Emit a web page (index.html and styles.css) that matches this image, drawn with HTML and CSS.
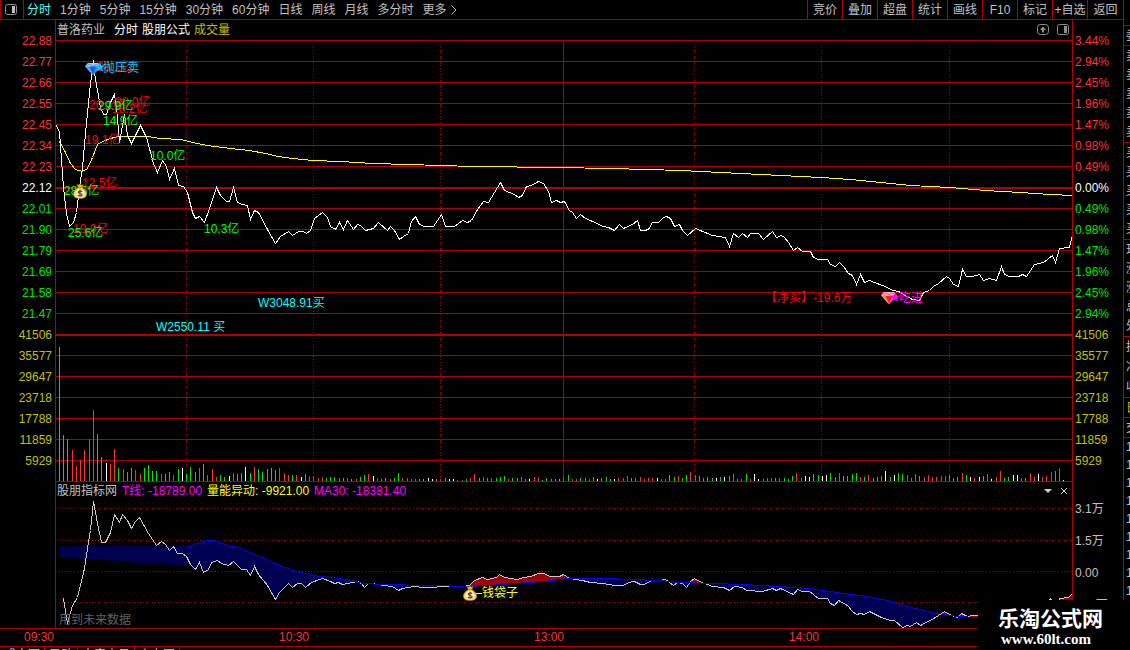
FILE: index.html
```html
<!DOCTYPE html>
<html lang="zh-CN">
<head>
    <meta charset="UTF-8">
    <meta name="viewport" content="width=device-width, initial-scale=1.0">
    <title>普洛药业 分时</title>
    <link rel="stylesheet" href="styles.css">
</head>
<body>
    <div class="app">
        <div class="main">
            <header class="topbar">
                <button class="layout-button" aria-label="布局">
                    <svg width="12" height="11" viewBox="0 0 12 11"><rect x=".5" y=".5" width="11" height="10" rx="2" fill="none" stroke="#909090"/><rect x="7" y="2" width="3" height="7" fill="#c0c0c0"/></svg>
                </button>
                <nav class="periods">
                    <button class="active">分时</button>
                    <button>1分钟</button>
                    <button>5分钟</button>
                    <button>15分钟</button>
                    <button>30分钟</button>
                    <button>60分钟</button>
                    <button>日线</button>
                    <button>周线</button>
                    <button>月线</button>
                    <button>多分时</button>
                    <button class="more">更多<svg width="7" height="10" viewBox="0 0 7 10"><path d="M1.5 .5L6 5L1.5 9.5" fill="none" stroke="#c0c0c0"/></svg></button>
                </nav>
                <div class="tools">
                    <button>竞价</button>
                    <button>叠加</button>
                    <button>超盘</button>
                    <button>统计</button>
                    <button>画线</button>
                    <button>F10</button>
                    <button>标记</button>
                    <button>+自选</button>
                    <button>返回</button>
                </div>
            </header>

            <div class="charts">
                <div class="axis axis-left">
                    <span class="up">22.88</span>
                    <span class="up">22.77</span>
                    <span class="up">22.66</span>
                    <span class="up">22.55</span>
                    <span class="up">22.45</span>
                    <span class="up">22.34</span>
                    <span class="up">22.23</span>
                    <span class="flat">22.12</span>
                    <span class="down">22.01</span>
                    <span class="down">21.90</span>
                    <span class="down">21.79</span>
                    <span class="down">21.69</span>
                    <span class="down">21.58</span>
                    <span class="down">21.47</span>
                    <span class="vol">41506</span>
                    <span class="vol">35577</span>
                    <span class="vol">29647</span>
                    <span class="vol">23718</span>
                    <span class="vol">17788</span>
                    <span class="vol">11859</span>
                    <span class="vol">5929</span>
                </div>

                <div class="panel">
                    <div class="panel-title">
                        <span class="stock">普洛药业</span>
                        <span class="flat">分时</span>
                        <span class="flat">股朋公式</span>
                        <span class="vol">成交量</span>
                        <div class="panel-buttons">
                            <button aria-label="上移">
                                <svg width="12" height="12" viewBox="0 0 12 12"><rect x=".5" y=".5" width="11" height="10" rx="3" fill="none" stroke="#909090"/><path d="M6 2.5L9 6H7V8.5H5V6H3Z" fill="#909090"/></svg>
                            </button>
                            <button aria-label="侧栏">
                                <svg width="12" height="12" viewBox="0 0 12 12"><rect x=".5" y=".5" width="11" height="10" rx="2" fill="none" stroke="#909090"/><rect x="7" y="2" width="3" height="7" fill="#909090"/></svg>
                            </button>
                        </div>
                    </div>
                    <div class="plot" id="pricePlot">
                        <svg class="price-svg" id="price" viewBox="55.5 39.5 1016 441" preserveAspectRatio="none"></svg>
                    </div>
                    <div class="indicator-title">
                        <span class="stock">股朋指标网</span>
                        <span class="magenta">T线: -18789.00</span>
                        <span class="yellow">量能异动: -9921.00</span>
                        <span class="magenta">MA30: -18381.40</span>
                        <div class="panel-buttons">
                            <button aria-label="菜单"><svg width="8" height="8" viewBox="0 0 8 8"><path d="M0 2H8L4 6Z" fill="#d0d0d0"/></svg></button>
                            <button aria-label="关闭"><svg width="8" height="8" viewBox="0 0 8 8"><path d="M1 1L7 7M7 1L1 7" stroke="#d0d0d0"/></svg></button>
                        </div>
                    </div>
                    <div class="plot" id="indicatorPlot">
                        <svg class="indicator-svg" id="indicator" viewBox="55.5 498.5 1016 129" preserveAspectRatio="none"></svg>
                    </div>
                </div>

                <div class="axis axis-right">
                    <span class="up">3.44%</span>
                    <span class="up">2.94%</span>
                    <span class="up">2.45%</span>
                    <span class="up">1.96%</span>
                    <span class="up">1.47%</span>
                    <span class="up">0.98%</span>
                    <span class="up">0.49%</span>
                    <span class="flat">0.00%</span>
                    <span class="down">0.49%</span>
                    <span class="down">0.98%</span>
                    <span class="down">1.47%</span>
                    <span class="down">1.96%</span>
                    <span class="down">2.45%</span>
                    <span class="down">2.94%</span>
                    <span class="vol">41506</span>
                    <span class="vol">35577</span>
                    <span class="vol">29647</span>
                    <span class="vol">23718</span>
                    <span class="vol">17788</span>
                    <span class="vol">11859</span>
                    <span class="vol">5929</span>
                    <div class="axis-indicator">
                        <span>3.1万</span>
                        <span>1.5万</span>
                        <span>0.00</span>
                        <span>-1.5万</span>
                    </div>
                </div>
            </div>

            <div class="times">
                <span>09:30</span>
                <span>10:30</span>
                <span>13:00</span>
                <span>14:00</span>
            </div>
            <div class="tabs">
                <button class="active">成交图</button>
                <button>异动</button>
                <button>大宗交易</button>
                <button>主力图</button>
            </div>
        </div>

        <aside class="quote">
            <div class="quote-block"><span>委</span></div>
            <div class="quote-block five"><span>卖</span><span>卖</span><span>卖</span><span>卖</span><span>卖</span></div>
            <div class="quote-block five"><span>买</span><span>买</span><span>买</span><span>买</span><span>买</span></div>
            <div class="quote-block five"><span>现</span><span>涨</span><span>涨</span><span>总</span><span>外</span></div>
            <div class="quote-block three"><span>换</span><span>净</span><span>收</span></div>
            <div class="quote-block vol"><span>日</span></div>
            <div class="quote-block"><span>交</span></div>
            <div class="ticks"><span>1</span><span>1</span><span>1</span><span>1</span><span>1</span><span>1</span><span>1</span><span>1</span><span>1</span></div>
        </aside>

        <div class="watermark">
            <strong>乐淘公式网</strong>
            <span>www.60lt.com</span>
        </div>
    </div>

    <svg class="defs">
        <symbol id="bag" viewBox="0 0 16 17">
            <path d="M4.5 1.5L6.5 2L8 .8L9.5 2L11.5 1.5L10 5H6Z" fill="#e8c000" stroke="#806000" stroke-width=".6"/>
            <path d="M6 5H10C13 7 15.5 9.5 15 12.5C14.5 15.5 12 16.5 8 16.5S1.500 15.5 1 12.500C.5 9.500 3 7 6 5Z" fill="#f5dc50" stroke="#a08030" stroke-width=".7"/>
            <circle cx="8" cy="11" r="4.300" fill="#fff0c8"/>
            <path d="M10.300 9.200C9.600 8.200 6.200 8 6 9.700S10.400 11 10.300 12.600S6.500 14 5.700 12.700M8 7.200V14.500" fill="none" stroke="#603838" stroke-width="1.200"/>
        </symbol>
        <symbol id="gemBlue" viewBox="0 0 16 13">
            <path d="M3 .5H13L16 4L8 13L0 4Z" fill="#3c8cf0"/>
            <path d="M3 .5H13L16 4H0Z" fill="#a8d0ff"/>
            <path d="M5 4H11L8 13Z" fill="#1c60d0"/>
            <path d="M2 3L5 1.500L8 3.500L11 1.500L14 3" fill="none" stroke="#5098f0"/>
            <path d="M2.500 5L6.500 10" stroke="#90c8ff"/>
        </symbol>
        <symbol id="gemRed" viewBox="0 0 16 13">
            <path d="M3 .5H13L16 4L8 13L0 4Z" fill="#f07868"/>
            <path d="M3 .5H13L16 4H0Z" fill="#ffc0b0"/>
            <path d="M4.500 4.500H11.500L8 12Z" fill="#ff1830"/>
            <path d="M2 3.500L5 1.500L8 3L11 1.500L14 3.500" fill="none" stroke="#e06050"/>
            <path d="M2.500 5.500L6.500 10" stroke="#ffb0a0"/>
        </symbol>
        <symbol id="starBlue" viewBox="0 0 10 10">
            <path d="M5 0L6.300 3.500H10L7.200 5.800L8.200 9.500L5 7.400L1.800 9.500L2.800 5.800L0 3.500H3.700Z" fill="#00c8ff"/>
        </symbol>
        <symbol id="starMagenta" viewBox="0 0 10 10">
            <path d="M5 0L6.300 3.500H10L7.200 5.800L8.200 9.500L5 7.400L1.800 9.500L2.800 5.800L0 3.500H3.700Z" fill="#f0f"/>
        </symbol>
    </svg>

    <script>
        const LEFT = 56;
        const WIDTH = 1016;
        const SVG_NS = 'http://www.w3.org/2000/svg';

        const priceLine = '56,125 59,132 60,145 63,187 66,213 69,226 73,222 76,212 79,187 82,167 85,133 88,103 90,83 93,60 94,73 97,90 100,107 103,114 106,114 110,102 114,94 116,107 119,142 124,114 127,135 131,143 140,125 146,137 153,163 157,172 162,160 166,166 169,179 174,168 178,185 183,186 187,192 192,212 195,218 199,216 204,222 208,211 213,196 216,187 220,195 226,201 229,201 233,187 237,202 242,204 247,205 250,219 254,210 258,212 267,229 275,243 280,236 288,231 292,235 298,231 303,231 306,233 310,230 314,218 322,212 327,217 330,226 335,229 339,222 343,229 347,220 353,229 357,224 360,225 365,230 373,228 378,222 387,230 390,226 394,230 399,239 403,236 408,233 411,221 415,216 419,224 424,226 433,226 441,214 445,226 454,226 462,220 467,222 471,220 477,209 483,201 488,202 500,182 504,190 514,194 518,197 522,195 526,186 531,185 538,181 543,183 548,191 551,202 556,200 560,202 564,201 569,210 572,212 576,218 580,214 585,218 597,223 602,226 608,227 614,230 619,224 623,228 632,224 637,220 640,230 644,230 648,229 652,222 658,222 663,217 666,216 670,218 674,226 679,224 682,230 687,235 695,228 712,235 718,236 725,237 729,246 733,233 738,237 742,233 747,237 750,233 758,233 763,239 772,231 776,237 781,235 784,237 788,242 793,250 797,247 802,251 810,251 813,257 818,259 827,259 830,264 835,266 839,262 843,266 848,273 852,275 856,284 860,274 864,282 869,280 887,287 892,290 898,291 912,299 919,300 923,292 929,290 933,286 938,283 946,276 949,278 953,284 958,286 962,269 966,276 972,276 979,274 983,280 989,278 996,280 1001,266 1004,274 1009,276 1018,276 1022,274 1026,276 1034,264 1043,262 1052,255 1055,262 1059,248 1069,247 1072,235';
        const avgLine = '59,141 65,152 70,163 75,169 82,171 87,168 92,157 97,144 102,141 110,138 118,136 147,136 160,138 180,139 197,143 207,145 230,148 249,150 265,153 278,156 292,158 313,160 340,161 373,163 407,164 440,165 473,166 558,167 609,168 647,169 680,170 720,172 760,174 800,176 821,177 850,179 880,182 910,185 949,187 985,190 1020,192 1050,194 1072,195';

        // r = 涨, g = 跌, w = 平, 数字为柱高
        const volumes = 'g134 g46 g42 r31 r15 r21 r31 r42 r71 g47 g24 w18 r17 r32 g13 r12 g9 g13 r11 r7 g13 g16 g10 g10 r7 g7 g9 r6 g12 w13 g7 g14 g9 r13 g17 r6 r12 r4 g6 g4 w5 r8 g7 g8 w14 g8 r14 g12 g9 g12 g13 g11 r13 r8 r6 g6 r6 w4 g7 r5 r5 r3 r4 g3 ' +
            'g4 g4 r3 g3 r3 g2 r2 g4 g6 r7 w5 r3 g2 g3 r2 g3 g8 r3 r3 r2 r2 g2 g2 w3 w2 r2 r2 g3 w2 w2 r1 r1 g2 r3 r7 g3 r4 g3 r3 g3 g4 g5 r2 g3 g3 r4 g2 w2 r4 r4 g1 g3 g2 g2 g2 r4 g6 r2 r2 g3 g3 r2 g4 w2 g3 g4 g2 w2 r3 r3 r5 g3 g3 r4 r2 r3 r3 w3 ' +
            'r2 r2 g6 g4 r5 g3 g6 r9 r6 g5 g3 g4 g3 w3 g4 w4 g5 r7 g2 r2 g7 r2 w7 w2 g2 r3 r3 g3 r3 g3 g2 g5 r8 g3 w5 w4 g7 g6 w5 w6 g8 g4 r8 g5 g5 g7 g8 r4 g4 r6 g3 g4 g5 w10 g4 w6 g8 g7 r6 g3 r7 g5 r4 r6 r4 r4 r5 r5 g6 g3 g4 r8 g6 w4 r3 w4 g5 r7 ' +
            'w2 r4 r10 g3 g4 w6 w6 r3 g3 r8 r4 w7 r4 r5 r9 g10 r13 w1';

        const fundLine = '63,598 67,623 72,605 77,597 80,585 84,568 87,548 90,530 93,501 97,523 101,542 105,542 110,532 114,514 119,522 122,514 127,520 131,528 135,521 139,517 148,533 156,545 161,541 165,544 169,550 173,546 177,553 182,553 186,556 190,564 195,569 199,562 203,572 208,569 211,562 217,560 221,563 228,565 233,561 241,569 246,569 250,575 254,566 258,574 267,585 275,599 279,592 288,583 292,587 297,583 301,583 305,587 311,582 322,578 330,581 334,583 338,582 342,584 357,581 361,583 364,587 368,583 371,583 383,585 392,586 398,590 402,588 413,586 424,587 433,587 440,586 450,586 463,586 469,585 474,580 482,577 487,579 496,577 499,574 504,577 517,579 523,577 530,576 538,573 543,573 550,576 559,576 563,574 569,578 582,580 590,582 603,583 614,585 623,585 628,582 634,581 640,584 644,584 651,580 658,580 665,579 673,585 677,582 682,583 686,587 690,581 694,578 699,581 712,586 723,587 729,590 734,586 742,587 746,590 762,591 772,588 776,590 780,588 793,594 797,589 802,591 809,591 818,598 827,598 830,603 834,605 838,600 847,605 852,611 856,614 860,613 864,614 869,611 881,617 890,620 894,620 902,627 907,625 910,626 916,622 920,625 935,617 944,611 949,614 957,617 961,613 967,616 973,615 978,615 1000,612 1048,602 1050,598 1053,602 1058,603 1059,598 1068,597 1072,593';
        const maLine = '186,547 197,543 207,540 214,540 227,545 238,547 252,553 262,557 277,564 293,570 312,575 330,577 347,579 363,583 383,584 427,585 469,586 487,585 513,583 543,581 568,578 607,578 630,579 658,580 680,582 743,584 777,586 810,588 843,593 860,595 887,600 910,607 937,613 957,616 978,617 1072,603';

        function add(svg, name, attrs) {
            const el = document.createElementNS(SVG_NS, name);
            for (const key in attrs) el.setAttribute(key, attrs[key]);
            svg.appendChild(el);
        }

        function line(svg, x1, y1, x2, y2, cls) {
            add(svg, 'line', { x1, y1, x2, y2, class: cls });
        }

        function parse(str) {
            return str.split(' ').map(p => p.split(',').map(Number));
        }

        function valueAt(points, x) {
            for (let i = 1; i < points.length; i++) {
                const [x1, y1] = points[i - 1];
                const [x2, y2] = points[i];
                if (x <= x2) return y1 + (y2 - y1) * (x - x1) / (x2 - x1);
            }
            return points[points.length - 1][1];
        }

        // 两条线之间的填充
        function band(svg, a, b, from, to, cls) {
            const cut = pts => [[from, valueAt(pts, from)], ...pts.filter(p => p[0] > from && p[0] < to), [to, valueAt(pts, to)]];
            add(svg, 'polygon', { points: cut(a).concat(cut(b).reverse()).join(' '), class: cls });
        }

        function label(plotId, top, items) {
            const plot = document.getElementById(plotId);
            items.forEach(([x, y, text, cls]) => {
                const el = document.createElement('span');
                el.className = 'label ' + cls;
                el.textContent = text;
                el.style.left = (x - LEFT) / WIDTH * 100 + '%';
                el.style.top = y - top + 'px';
                plot.appendChild(el);
            });
        }

        function icon(plotId, top, x, y, id, cls = 'icon') {
            const plot = document.getElementById(plotId);
            const svg = document.createElementNS(SVG_NS, 'svg');
            svg.setAttribute('class', cls);
            svg.style.left = (x - LEFT) / WIDTH * 100 + '%';
            svg.style.top = y - top + 'px';
            add(svg, 'use', { href: '#' + id });
            plot.appendChild(svg);
        }

        function drawPrice() {
            const svg = document.getElementById('price');
            for (let i = 0; i < 21; i++) {
                const y = 40 + i * 21;
                line(svg, 55, y, 1072, y, 'grid');
                if (i === 7 || i === 14) line(svg, 55, y + 1, 1072, y + 1, 'grid');
            }
            [186, 313, 440, 694, 821, 949].forEach(x => line(svg, x, 43, x, 481, 'grid dotted'));
            line(svg, 563, 40, 563, 481, 'grid');
            volumes.split(' ').forEach((v, i) => {
                const x = Math.round(59 + i * 4.238);
                line(svg, x, 480.5, x, 480.5 - Number(v.slice(1)), 'bar-' + v[0]);
            });
            add(svg, 'polyline', { points: avgLine, class: 'avg' });
            add(svg, 'polyline', { points: priceLine, class: 'price' });
        }

        function drawIndicator() {
            const svg = document.getElementById('indicator');
            const fund = parse(fundLine);
            const ma = parse(maLine);
            [508, 540, 571, 602].forEach(y => line(svg, 58, y, 1072, y, 'grid dotted'));
            add(svg, 'polygon', { points: '59,546 125,545 186,545 186,565 150,563 110,560 80,558 59,557', class: 'band-down' });
            band(svg, ma, fund, 186, 469, 'band-down');
            band(svg, ma, fund, 469, 569, 'band-up');
            band(svg, ma, fund, 569, 689, 'band-down');
            band(svg, ma, fund, 689, 699, 'band-up');
            band(svg, ma, fund, 699, 937, 'band-down');
            band(svg, ma, fund, 937, 1072, 'band-up');
            add(svg, 'polyline', { points: fundLine, class: 'fund' });
            add(svg, 'polyline', { points: maLine, class: 'ma' });
        }

        drawPrice();
        drawIndicator();

        label('pricePlot', 40, [
            [97, 67, '28.1亿', 'red'],
            [89, 105, '20.1亿', 'red'],
            [115, 102, '20.0亿', 'red'],
            [112, 109, '18.2亿', 'red'],
            [98, 106, '29.9亿', 'green'],
            [103, 121, '14.9亿', 'green'],
            [85, 140, '19.1亿', 'red'],
            [150, 156, '10.0亿', 'green'],
            [82, 183, '12.5亿', 'red'],
            [64, 191, '28.5亿', 'green'],
            [73, 229, '19.0亿', 'red'],
            [68, 233, '25.6亿', 'green'],
            [204, 229, '10.3亿', 'green'],
            [258, 303, 'W3048.91买', 'cyan'],
            [156, 327, 'W2550.11 买', 'cyan'],
            [765, 298, '【净买】-19.6万', 'red'],
            [103, 68, '抛压卖', 'blue'],
            [899, 298, '吃进', 'magenta']
        ]);
        icon('pricePlot', 40, 85, 61, 'gemBlue');
        icon('pricePlot', 40, 95, 62, 'starBlue', 'icon star');
        icon('pricePlot', 40, 72, 183, 'bag');
        icon('pricePlot', 40, 881, 290, 'gemRed');
        icon('pricePlot', 40, 890, 292, 'starMagenta', 'icon star');

        label('indicatorPlot', 499, [
            [59, 620, '用到未来数据', 'dim'],
            [482, 593, '钱袋子', 'yellow dash']
        ]);
        icon('indicatorPlot', 499, 462, 585, 'bag');
    </script>
</body>
</html>
```
FILE: styles.css
```css
body {
    font-family: "Liberation Sans", "Noto Sans CJK SC", sans-serif;
    font-size: 12px;
    line-height: 14px;
    margin: 0;
    background-color: #000;
    color: #c0c0c0;
}

button {
    font: inherit;
    color: inherit;
    background: none;
    border: none;
    padding: 0;
    cursor: pointer;
    white-space: nowrap;
}

.app {
    position: relative;
    display: flex;
    height: 100vh;
    overflow: hidden;
}

.main {
    flex: 1;
    min-width: 0;
}

.topbar {
    display: flex;
    height: 19px;
    border-bottom: 1px solid #b00000;
}

.layout-button {
    display: flex;
    align-items: center;
    width: 24px;
    padding-left: 4px;
    border-left: 1px solid #b00000;
    border-right: 1px solid #b00000;
}

.periods {
    display: flex;
    gap: 9px;
    padding-left: 3px;
}

.periods .active,
.tabs .active {
    color: #54fcfc;
}

.more {
    display: flex;
    align-items: center;
    gap: 3px;
}

.tools {
    display: flex;
    margin-left: auto;
}

.tools button {
    width: 35px;
    border-left: 1px solid #b00000;
}

.tools button:last-child {
    width: 36px;
}

.charts {
    display: flex;
    border-bottom: 1px solid #b00000;
}

.axis {
    display: flex;
    flex-direction: column;
    box-sizing: border-box;
    padding-top: 11px;
    line-height: 21px;
}

.axis-left {
    width: 55px;
    padding-right: 3px;
    text-align: right;
}

.axis-right {
    width: 51px;
    padding-left: 2px;
    border-left: 1px solid #b00000;
}

.axis-indicator {
    display: flex;
    flex-direction: column;
    gap: 11px;
    height: 130px;
    margin-top: 27px;
    margin-bottom: -1px;
    overflow: hidden;
}

.up {
    color: #ff3232;
}

.down {
    color: #00e600;
}

.flat {
    color: #fff;
}

.vol {
    color: #c0c000;
}

.stock {
    color: #c0c0c0;
}

.panel {
    flex: 1;
    min-width: 0;
    border-left: 1px solid #b00000;
}

.panel-title {
    display: flex;
    align-items: center;
    gap: 4px;
    height: 20px;
    padding: 0 3px 0 1px;
}

.panel-title .stock {
    margin-right: 5px;
}

.panel-buttons {
    display: flex;
    gap: 8px;
    margin-left: auto;
}

.panel-buttons button {
    display: flex;
}

.indicator-title {
    display: flex;
    align-items: center;
    gap: 5px;
    height: 17px;
    padding: 0 4px 0 1px;
    border-top: 1px solid #b00000;
}

.plot {
    position: relative;
}

.plot > svg {
    display: block;
}

.price-svg {
    width: 100%;
    height: 441px;
}

.indicator-svg {
    width: 100%;
    height: 129px;
}

.plot line,
.plot polyline {
    fill: none;
    stroke-width: 1;
    shape-rendering: crispEdges;
    vector-effect: non-scaling-stroke;
}

.grid {
    stroke: #b00000;
}

.dotted {
    stroke-dasharray: 1 2;
}

.price {
    stroke: #fff;
}

.avg {
    stroke: #ff0;
}

.fund {
    stroke: #c8c8c8;
}

.ma {
    stroke: #00f;
}

.bar-r {
    stroke: #ff3232;
}

.bar-g {
    stroke: #00e600;
}

.bar-w {
    stroke: #fff;
}

.band-down {
    fill: #000050;
}

.band-up {
    fill: #a00000;
}

.label {
    position: absolute;
    line-height: 14px;
    margin-top: -7px;
    white-space: nowrap;
}

.plot > .icon {
    position: absolute;
    width: 16px;
    height: 16px;
}

.plot > .star {
    width: 10px;
    height: 10px;
}

.red {
    color: #f00;
}

.green {
    color: #0f0;
}

.cyan {
    color: #0ff;
}

.blue {
    color: #00c8ff;
}

.magenta {
    color: #f0f;
}

.yellow {
    color: #ff0;
}

.dim {
    color: #606060;
}

.dash::before {
    content: "";
    position: absolute;
    top: 7px;
    right: 100%;
    width: 6px;
    height: 1px;
    background-color: #ff0;
}

.times {
    display: grid;
    grid-template-columns: repeat(4, 1fr);
    padding: 0 79px 0 24px;
    line-height: 17px;
    color: #ff3232;
    border-bottom: 1px solid #b00000;
}

.tabs {
    display: flex;
}

.tabs button {
    padding: 1px 4px;
    border-right: 1px solid #b00000;
}

.quote {
    box-sizing: border-box;
    width: 7px;
    padding-top: 25px;
    border-left: 1px solid #b00000;
    overflow: hidden;
}

.quote-block {
    display: flex;
    flex-direction: column;
    justify-content: space-around;
    height: 19px;
    padding-left: 2px;
    border-top: 1px solid #b00000;
}

.five {
    height: 96px;
}

.three {
    height: 60px;
}

.ticks {
    padding-left: 2px;
    line-height: 18px;
    border-top: 1px solid #b00000;
}

.ticks span {
    display: block;
}

.watermark {
    position: absolute;
    right: 0;
    bottom: 0;
    display: flex;
    flex-direction: column;
    box-sizing: border-box;
    width: 152px;
    height: 50px;
    padding: 7px 0 0 20px;
    background-color: #000;
    color: #fff;
}

.watermark strong {
    font-size: 21px;
    line-height: 24px;
}

.watermark span {
    padding-left: 3px;
    font-family: "Liberation Serif", serif;
    font-size: 15px;
    font-weight: bold;
    line-height: 16px;
}

.defs {
    position: absolute;
    width: 0;
    height: 0;
}
```
